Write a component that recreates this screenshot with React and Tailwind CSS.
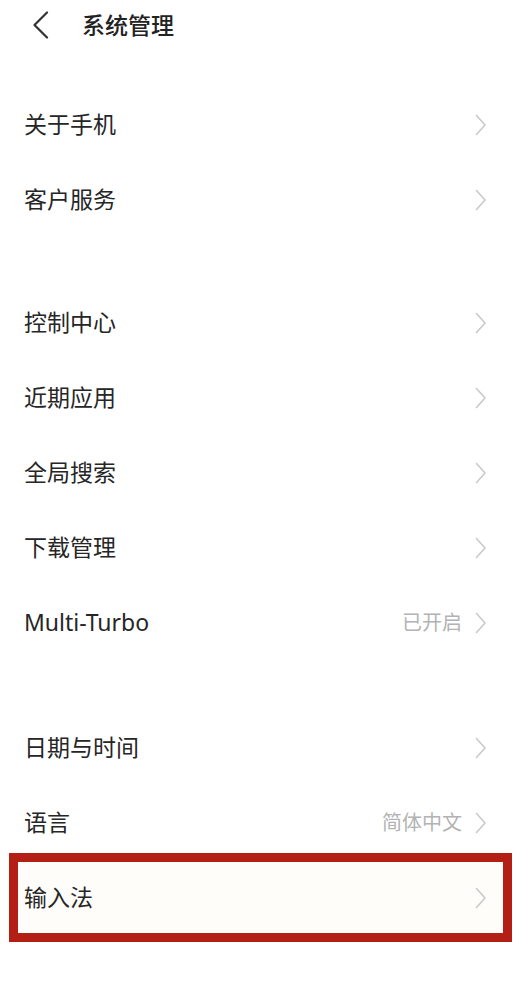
import React from "react";

function Chevron() {
  return (
    <svg width="12" height="22" viewBox="0 0 12 22" className="shrink-0">
      <path d="M1.5 1.5 L10 11 L1.5 20.5" fill="none" stroke="#c9c9c9" strokeWidth="1.6" strokeLinecap="round" strokeLinejoin="round" />
    </svg>
  );
}

function Row({ label, value, highlight }) {
  return (
    <div className="relative h-[75px] flex items-center pl-[24px] pr-[32px]">
      {highlight && (
        <div className="absolute left-[9px] right-[7px] top-[-7px] bottom-[-7px] border-[9px] border-[#b31f14] bg-[#fffdfa]" />
      )}
      <span className="relative flex-1 text-[23px] text-[#262626]">{label}</span>
      {value && <span className="relative text-[20px] text-[#b3b3b3] mr-[13px]">{value}</span>}
      <span className="relative"><Chevron /></span>
    </div>
  );
}

export default function App() {
  return (
    <div
      className="w-[519px] h-[985px] bg-white overflow-hidden"
      style={{ fontFamily: '"Noto Sans", "Noto Sans CJK SC", sans-serif' }}
    >
      <div className="h-[50px] flex items-center pl-[32px]">
        <svg width="18" height="28" viewBox="0 0 18 28">
          <path d="M15 1.5 L2.5 14 L15 26.5" fill="none" stroke="#333" strokeWidth="2.2" strokeLinecap="round" strokeLinejoin="round" />
        </svg>
        <span className="ml-[32px] text-[23px] font-medium text-[#222]">系统管理</span>
      </div>
      <div className="h-[37px]" />
      <Row label="关于手机" />
      <Row label="客户服务" />
      <div className="h-[48px]" />
      <Row label="控制中心" />
      <Row label="近期应用" />
      <Row label="全局搜索" />
      <Row label="下载管理" />
      <Row label="Multi-Turbo" value="已开启" />
      <div className="h-[50px]" />
      <Row label="日期与时间" />
      <Row label="语言" value="简体中文" />
      <Row label="输入法" highlight />
    </div>
  );
}
